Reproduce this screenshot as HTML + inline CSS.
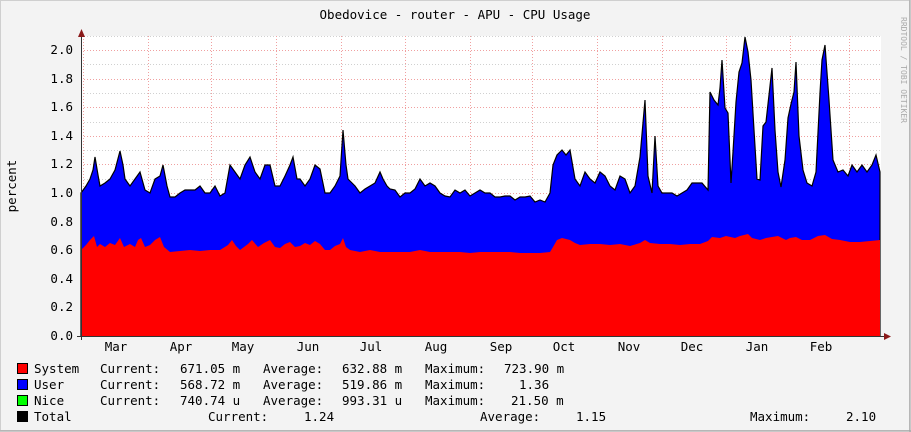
<!DOCTYPE html>
<html><head><meta charset="utf-8"><style>
html,body{margin:0;padding:0;background:#f3f3f3}
svg{display:block}
text{font-family:"DejaVu Sans Mono","Liberation Mono",monospace;font-size:12.5px;fill:#000;white-space:pre}
</style></head><body>
<svg width="911" height="432" viewBox="0 0 911 432" xmlns="http://www.w3.org/2000/svg">
<rect x="0" y="0" width="911" height="432" fill="#f3f3f3"/>
<rect x="0.5" y="0.5" width="909" height="430" fill="none" stroke="#cfcfcf" stroke-width="1"/>
<line x1="0" y1="431" x2="911" y2="431" stroke="#9c9c9c"/>
<line x1="910" y1="0" x2="910" y2="432" stroke="#9c9c9c"/>
<rect x="81" y="36" width="800" height="300" fill="#fff"/>
<g stroke="#d0d0d0" stroke-dasharray="1,2" stroke-width="1">
<line x1="81" y1="36.5" x2="881" y2="36.5"/><line x1="81" y1="64.5" x2="881" y2="64.5"/><line x1="81" y1="93.5" x2="881" y2="93.5"/><line x1="81" y1="122.5" x2="881" y2="122.5"/><line x1="81" y1="150.5" x2="881" y2="150.5"/><line x1="81" y1="179.5" x2="881" y2="179.5"/><line x1="81" y1="207.5" x2="881" y2="207.5"/><line x1="81" y1="236.5" x2="881" y2="236.5"/><line x1="81" y1="265.5" x2="881" y2="265.5"/><line x1="81" y1="293.5" x2="881" y2="293.5"/><line x1="81" y1="322.5" x2="881" y2="322.5"/>
</g>
<g stroke="#f0a0a0" stroke-dasharray="1,2" stroke-width="1">
<line x1="81" y1="50.5" x2="881" y2="50.5"/><line x1="81" y1="79.5" x2="881" y2="79.5"/><line x1="81" y1="107.5" x2="881" y2="107.5"/><line x1="81" y1="136.5" x2="881" y2="136.5"/><line x1="81" y1="164.5" x2="881" y2="164.5"/><line x1="81" y1="193.5" x2="881" y2="193.5"/><line x1="81" y1="221.5" x2="881" y2="221.5"/><line x1="81" y1="250.5" x2="881" y2="250.5"/><line x1="81" y1="279.5" x2="881" y2="279.5"/><line x1="81" y1="307.5" x2="881" y2="307.5"/>
<line x1="83.5" y1="36" x2="83.5" y2="336"/><line x1="148.5" y1="36" x2="148.5" y2="336"/><line x1="211.5" y1="36" x2="211.5" y2="336"/><line x1="276.5" y1="36" x2="276.5" y2="336"/><line x1="341.5" y1="36" x2="341.5" y2="336"/><line x1="405.5" y1="36" x2="405.5" y2="336"/><line x1="470.5" y1="36" x2="470.5" y2="336"/><line x1="532.5" y1="36" x2="532.5" y2="336"/><line x1="597.5" y1="36" x2="597.5" y2="336"/><line x1="662.5" y1="36" x2="662.5" y2="336"/><line x1="726.5" y1="36" x2="726.5" y2="336"/><line x1="790.5" y1="36" x2="790.5" y2="336"/><line x1="849.5" y1="36" x2="849.5" y2="336"/>
</g>
<path fill="#0000ff" stroke="#000" stroke-width="1.2" d="M81,336 L81,193 86,186 90,179 93,170 95,157 98,175 100,186 105,183 110,179 115,170 120,151 123,165 125,179 130,186 135,179 140,172 145,190 150,193 155,179 160,176 163,165 167,186 170,197 175,197 180,193 185,190 190,190 195,190 200,186 205,193 210,193 215,186 220,196 225,193 230,165 235,172 240,179 245,165 250,157 255,172 260,179 265,165 270,165 275,186 280,186 285,176 290,165 293,157 297,179 300,179 305,186 310,179 315,165 320,169 325,193 330,193 335,186 340,176 343,130 346,165 348,179 355,186 360,193 365,189 370,186 375,183 380,172 383,179 387,186 390,189 395,190 400,197 405,193 410,193 415,189 420,179 425,186 430,183 435,186 440,193 445,196 450,197 455,190 460,193 465,190 470,196 475,193 480,190 485,193 490,193 495,197 500,197 505,196 510,196 515,200 520,197 525,197 530,196 535,202 540,200 545,202 550,193 553,165 557,155 562,150 566,155 570,150 575,179 580,186 585,172 590,179 595,183 600,172 605,176 610,186 615,190 620,176 625,179 630,193 635,186 640,157 645,100 648,176 652,193 655,136 658,186 662,193 667,193 672,193 677,196 682,193 687,190 692,183 697,183 702,183 708,190 710,92 714,100 718,105 720,88 722,60 725,108 728,113 731,183 733,152 736,102 739,72 742,63 745,37 748,52 751,80 754,130 757,179 760,180 763,126 766,122 769,95 772,68 775,130 778,172 781,187 785,160 788,118 791,104 794,92 796,62 799,136 803,170 807,183 812,186 816,172 820,93 822,60 825,45 829,100 833,160 838,172 843,170 848,176 852,165 857,172 862,165 867,172 872,165 876,155 880,172 L880,336 Z"/>
<path fill="#ff0000" d="M81,336 L81,250 86,245 90,240 94,236 97,247 100,244 105,247 110,243 115,245 120,238 124,247 130,244 135,247 138,240 141,238 145,247 150,245 155,240 160,237 164,247 170,252 180,251 190,250 200,251 210,250 220,250 228,245 232,240 236,246 240,250 248,244 252,240 258,247 264,243 270,240 275,247 280,248 285,244 290,242 295,247 300,246 305,243 310,245 315,241 320,244 325,250 330,250 335,246 340,244 343,238 346,247 350,250 360,252 370,250 380,252 390,252 400,252 410,252 420,250 430,252 440,252 450,252 460,252 470,253 480,252 490,252 500,252 510,252 520,253 530,253 540,253 550,252 553,247 557,240 562,238 570,240 575,243 580,245 590,244 600,244 610,245 620,244 630,246 640,243 645,240 650,243 660,244 670,244 680,245 690,244 700,244 708,241 712,237 720,238 726,236 735,238 740,236 748,234 752,238 760,240 766,238 772,237 778,236 786,240 790,238 796,237 802,240 810,240 818,236 825,235 832,239 840,240 850,242 860,242 870,241 880,240 L880,336 Z"/>
<line x1="81.5" y1="32" x2="81.5" y2="340" stroke="#333"/>
<line x1="77" y1="336.5" x2="885" y2="336.5" stroke="#333"/>
<path d="M78,37 L81.5,29 85,37 Z" fill="#8b1a1a"/>
<path d="M884,333 L891,336.5 884,340 Z" fill="#8b1a1a"/>
<g text-anchor="end">
<text x="73" y="54">2.0</text><text x="73" y="83">1.8</text><text x="73" y="111">1.6</text><text x="73" y="140">1.4</text><text x="73" y="168">1.2</text><text x="73" y="197">1.0</text><text x="73" y="226">0.8</text><text x="73" y="254">0.6</text><text x="73" y="283">0.4</text><text x="73" y="311">0.2</text><text x="73" y="340">0.0</text>
</g>
<g text-anchor="middle">
<text x="116" y="351">Mar</text><text x="181" y="351">Apr</text><text x="243" y="351">May</text><text x="308" y="351">Jun</text><text x="371" y="351">Jul</text><text x="436" y="351">Aug</text><text x="501" y="351">Sep</text><text x="564" y="351">Oct</text><text x="629" y="351">Nov</text><text x="692" y="351">Dec</text><text x="757" y="351">Jan</text><text x="821" y="351">Feb</text>
<text x="455" y="19">Obedovice - router - APU - CPU Usage</text>
</g>
<text x="16" y="186" text-anchor="middle" transform="rotate(-90 16 186)">percent</text>
<text x="901" y="70" text-anchor="middle" transform="rotate(90 901 70)" style="font-size:8px;fill:#aaa">RRDTOOL / TOBI OETIKER</text>
<rect x="17.5" y="363.5" width="10" height="10" fill="#ff0000" stroke="#000"/>
<rect x="17.5" y="379.5" width="10" height="10" fill="#0000ff" stroke="#000"/>
<rect x="17.5" y="395.5" width="10" height="10" fill="#00ff00" stroke="#000"/>
<rect x="17.5" y="411.5" width="10" height="10" fill="#000" stroke="#000"/>
<text x="34" y="373">System</text><text x="100" y="373">Current:</text><text x="180" y="373">671.05 m</text><text x="263" y="373">Average:</text><text x="342" y="373">632.88 m</text><text x="425" y="373">Maximum:</text><text x="504" y="373">723.90 m</text>
<text x="34" y="389">User</text><text x="100" y="389">Current:</text><text x="180" y="389">568.72 m</text><text x="263" y="389">Average:</text><text x="342" y="389">519.86 m</text><text x="425" y="389">Maximum:</text><text x="519" y="389">1.36</text>
<text x="34" y="405">Nice</text><text x="100" y="405">Current:</text><text x="180" y="405">740.74 u</text><text x="263" y="405">Average:</text><text x="342" y="405">993.31 u</text><text x="425" y="405">Maximum:</text><text x="511" y="405">21.50 m</text>
<text x="34" y="421">Total</text>
<text x="208" y="421">Current:</text><text x="304" y="421">1.24</text>
<text x="480" y="421">Average:</text><text x="576" y="421">1.15</text>
<text x="750" y="421">Maximum:</text><text x="846" y="421">2.10</text>
</svg>
</body></html>
